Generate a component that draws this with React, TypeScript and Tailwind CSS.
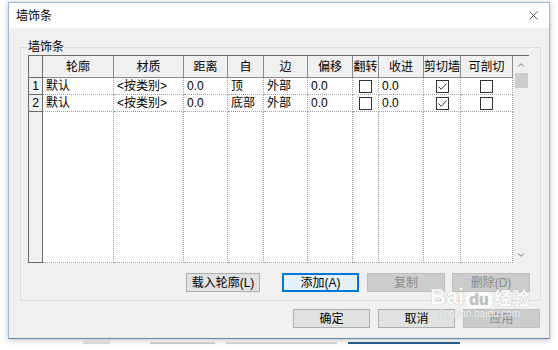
import { X, ChevronUp, ChevronDown } from "lucide-react";

type Cell = string | { check: boolean };

const COLS = [
  { label: "轮廓", w: "w-[71px]" },
  { label: "材质", w: "w-[70px]" },
  { label: "距离", w: "w-[44px]" },
  { label: "自", w: "w-[36px]" },
  { label: "边", w: "w-[44px]" },
  { label: "偏移", w: "w-[45px]" },
  { label: "翻转", w: "w-[26px]" },
  { label: "收进", w: "w-[45px]" },
  { label: "剪切墙", w: "w-[37px]" },
  { label: "可剖切", w: "w-[52px]" },
];

const ROWS: Cell[][] = [
  ["默认", "<按类别>", "0.0", "顶", "外部", "0.0", { check: false }, "0.0", { check: true }, { check: false }],
  ["默认", "<按类别>", "0.0", "底部", "外部", "0.0", { check: false }, "0.0", { check: true }, { check: false }],
];

function CheckBox({ on }: { on: boolean }) {
  return (
    <span className="flex h-[13px] w-[13px] items-center justify-center border border-[#333] bg-white">
      {on && (
        <svg width="11" height="11" viewBox="0 0 11 11">
          <path d="M1.5 5.5 L4.3 8.3 L9.5 2.5" fill="none" stroke="#333" strokeWidth="1" />
        </svg>
      )}
    </span>
  );
}

function Btn({
  label,
  w = "w-[77px]",
  kind = "normal",
}: {
  label: string;
  w?: string;
  kind?: "normal" | "focus" | "disabled";
}) {
  const look =
    kind === "focus"
      ? "border-2 border-[#0078d7] bg-[#e5f1fb] text-black"
      : kind === "disabled"
        ? "border border-[#bfbfbf] bg-[#cccccc] text-[#8a8a8a]"
        : "border border-[#adadad] bg-[#e1e1e1] text-black";
  return (
    <div className={`flex h-[19px] items-center justify-center text-[12px] leading-none ${w} ${look}`}>
      {label}
    </div>
  );
}

export default function App() {
  return (
    <div
      className="relative flex h-[350px] w-[558px] flex-col overflow-hidden bg-white text-black"
      style={{ fontFamily: "'Liberation Sans', 'Noto Sans CJK SC', sans-serif" }}
    >
      {/* dialog */}
      <div className="ml-[8px] mt-[2px] flex h-[337px] w-[542px] flex-col border border-[#8fb9e0] border-b-[#5f86ad] bg-[#f0f0f0] shadow-[0_1px_6px_rgba(0,0,0,0.25)]">
        {/* title bar */}
        <div className="flex h-[25px] items-center justify-between bg-white pl-[7px] pr-[8px] text-[12px]">
          <span>墙饰条</span>
          <X size={15} strokeWidth={1.2} className="text-[#222]" />
        </div>

        {/* group box */}
        <fieldset className="ml-[11px] mr-[8px] mt-[11px] border border-[#dcdcdc] pb-[8px] pl-[7px] pr-[10px]">
          <legend className="px-0 text-[12px] leading-[16px]">墙饰条</legend>

          {/* grid */}
          <div className="flex h-[208px] w-[501px] border-l border-t border-[#6b6b6b] bg-white text-[12px]">
            <div className="flex w-[484px] flex-col">
              {/* header */}
              <div className="flex h-[22px]">
                <div className="w-[14px] border-b border-r border-[#6b6b6b] bg-[#f0f0f0]" />
                {COLS.map((c) => (
                  <div
                    key={c.label}
                    className={`flex items-center justify-center border-b border-r border-[#8c8c8c] bg-[#f0f0f0] ${c.w}`}
                  >
                    {c.label}
                  </div>
                ))}
              </div>
              {ROWS.map((row, ri) => (
                <div key={ri} className="flex h-[17px]">
                  <div className="flex w-[14px] items-center justify-center border-b border-r border-[#6b6b6b] bg-[#f0f0f0]">
                    {ri + 1}
                  </div>
                  {row.map((cell, ci) => (
                    <div
                      key={ci}
                      className={`flex items-center border-b border-r border-dotted border-[#a0a0a0] ${COLS[ci].w} ${
                        typeof cell === "string" ? "pl-[3px]" : "justify-center"
                      }`}
                    >
                      {typeof cell === "string" ? cell : <CheckBox on={cell.check} />}
                    </div>
                  ))}
                </div>
              ))}
              {/* empty rows area */}
              <div className="flex flex-1">
                <div className="w-[14px] border-b border-r border-[#6b6b6b] bg-[#f0f0f0]" />
                {COLS.map((c) => (
                  <div key={c.label} className={`border-b border-r border-dotted border-[#a0a0a0] ${c.w}`} />
                ))}
              </div>
            </div>
            {/* scrollbar */}
            <div className="flex w-[17px] flex-col items-center bg-[#f0f0f0]">
              <div className="flex h-[17px] items-center justify-center">
                <ChevronUp size={10} strokeWidth={2} className="text-[#606060]" />
              </div>
              <div className="h-[15px] w-[13px] bg-[#cdcdcd]" />
              <div className="flex-1" />
              <div className="flex h-[17px] items-center justify-center">
                <ChevronDown size={10} strokeWidth={2} className="text-[#606060]" />
              </div>
            </div>
          </div>

          {/* grid buttons */}
          <div className="mt-[10px] flex items-center">
            <div className="ml-[158px]">
              <Btn label="载入轮廓(L)" w="w-[74px]" />
            </div>
            <div className="ml-[22px]">
              <Btn label="添加(A)" kind="focus" />
            </div>
            <div className="ml-[8px]">
              <Btn label="复制" w="w-[78px]" kind="disabled" />
            </div>
            <div className="ml-[7px]">
              <Btn label="删除(D)" w="w-[78px]" kind="disabled" />
            </div>
          </div>
        </fieldset>

        {/* dialog buttons */}
        <div className="mt-[8px] flex justify-end gap-[8px] pr-[9px]">
          <Btn label="确定" />
          <Btn label="取消" />
          <Btn label="应用" kind="disabled" />
        </div>
      </div>

      {/* bits of windows behind */}
      <div className="flex h-[6px] items-start">
        <div className="ml-[83px] h-[5px] w-[27px] bg-[#d8d8d8]" />
        <div className="ml-[40px] mt-[3px] h-[2px] w-[65px] bg-[#c8c8c8]" />
        <div className="ml-[11px] mt-[3px] h-[2px] w-[111px] bg-[#d0d0d0]" />
        <div className="ml-[11px] mt-[3px] h-[2px] w-[112px] bg-[#1e5a8c]" />
      </div>

      {/* watermark */}
      <div className="pointer-events-none absolute left-[430px] top-[286px] flex flex-col items-center text-white opacity-80">
        <div className="flex items-end gap-[2px] text-[22px] font-bold leading-none [text-shadow:0_0_1px_#9a9a9a]">
          <span>Bai</span>
          <span className="rounded-[6px] bg-white px-[3px] text-[16px] text-[#b8b8b8]">du</span>
          <span className="text-[18px]">经验</span>
        </div>
        <span className="text-[10px] leading-[12px] [text-shadow:0_0_1px_#9a9a9a]">jingyan.baidu.com</span>
      </div>
    </div>
  );
}
